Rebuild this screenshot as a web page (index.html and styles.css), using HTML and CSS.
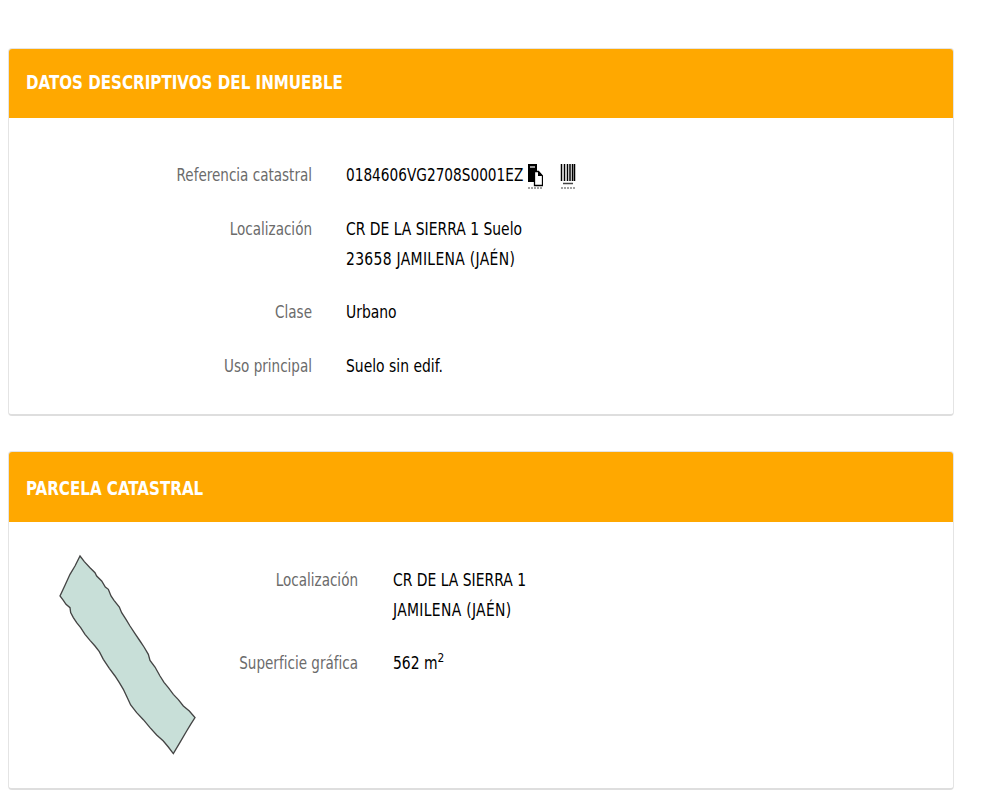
FILE: index.html
```html
<!DOCTYPE html>
<html lang="es">
<head>
    <meta charset="UTF-8">
    <title>Datos descriptivos del inmueble</title>
    <link rel="stylesheet" href="styles.css">
</head>
<body>
    <div class="card first">
        <div class="card-head"><span>DATOS DESCRIPTIVOS DEL INMUEBLE</span></div>
        <div class="card-body">
            <div class="rows">
                <div class="row">
                    <div class="label">Referencia catastral</div>
                    <div class="ref">
                        <span class="ref-num">0184606VG2708S0001EZ</span>
                        <svg class="icon-copy" width="16" height="28" viewBox="0 0 16 28">
                            <path d="M1 3h9v18h-9z" fill="#000"/>
                            <path d="M3 5h5v2h-5z" fill="#9a9a9a"/>
                            <path d="M7.500 10.500h4l4 4.500v9.500h-8z" fill="#fff" stroke="#000" stroke-width="1.300"/>
                            <path d="M11 10l4.500 5h-4.500z" fill="#000"/>
                            <path d="M1 27h14" stroke="#444" stroke-width="1" stroke-dasharray="2 1"/>
                        </svg>
                        <svg class="icon-bar" width="16" height="28" viewBox="0 0 16 28">
                            <path d="M1.500 3v17M4.500 3v17M7.500 3v17M10 3v17M12.500 3v17M14.500 3v17" stroke="#000" stroke-width="1.500"/>
                            <path d="M3 22.500h10" stroke="#444" stroke-width="1.400"/>
                            <path d="M1 27h14" stroke="#444" stroke-width="1" stroke-dasharray="2 1"/>
                        </svg>
                    </div>
                </div>
                <div class="row">
                    <div class="label">Localización</div>
                    <div class="value">CR DE LA SIERRA 1 Suelo<br><span class="wide">23658 JAMILENA (JAÉN)</span></div>
                </div>
                <div class="row">
                    <div class="label">Clase</div>
                    <div class="value">Urbano</div>
                </div>
                <div class="row">
                    <div class="label">Uso principal</div>
                    <div class="value">Suelo sin edif.</div>
                </div>
            </div>
        </div>
    </div>

    <div class="card second">
        <div class="card-head"><span>PARCELA CATASTRAL</span></div>
        <div class="card-body parcel">
            <svg class="plot" width="170" height="225" viewBox="0 0 510 675">
                <polygon points="120,45 133,62 150,80 165,95 170,105 185,120 196,138 205,145 213,165 222,178 238,198 245,215 258,235 270,255 285,278 300,300 312,318 325,340 330,358 345,378 360,405 372,424 385,440 400,460 415,476 430,495 448,510 465,530 452,550 440,570 420,604 400,638 385,618 370,600 350,582 330,560 310,536 290,515 272,492 262,470 250,445 238,425 225,405 208,382 190,355 178,332 165,315 150,298 135,280 122,260 110,245 100,230 92,215 90,200 78,190 70,178 60,165 75,133 90,100 105,75" fill="#c8dfd8" stroke="#444" stroke-width="4"/>
            </svg>
            <div class="rows small">
                <div class="row">
                    <div class="label">Localización</div>
                    <div class="value">CR DE LA SIERRA 1<br><span class="wide">JAMILENA (JAÉN)</span></div>
                </div>
                <div class="row">
                    <div class="label">Superficie gráfica</div>
                    <div class="value">562 m<sup>2</sup></div>
                </div>
            </div>
        </div>
    </div>
</body>
</html>
```

FILE: styles.css
```css
*{box-sizing:border-box;}
body{margin:48px 46px 0 8px;font-family:"DejaVu Sans Condensed","DejaVu Sans",sans-serif;font-stretch:condensed;font-size:17px;color:#000;background:#fff;}

.card{border:1px solid #e4e4e4;border-bottom:2px solid #dedede;border-radius:4px;overflow:hidden;background:#fff;}
.card.first{margin-bottom:35px;}
.card-head{height:69px;line-height:67px;padding-left:17px;background:#ffa800;color:#fff;font-weight:bold;font-size:20px;}
.second .card-head{height:70px;line-height:72px;}
/* the original face is narrower than anything installed */
.card-head span{display:inline-block;transform:scaleX(.84);transform-origin:left;}
.card-body{padding:42px 0 33px;}

.row{display:flex;margin-bottom:23.600px;line-height:30px;}
.row:last-child{margin-bottom:0;}
.label{width:303px;margin-right:34px;text-align:right;color:#6b6b6b;transform:scaleX(.885);transform-origin:right;}
.value{flex:1;transform:scaleX(.91);transform-origin:left;}
.wide{letter-spacing:.35px;}
.ref{display:flex;flex:1;align-items:center;}
.ref-num{transform:scaleX(.895);transform-origin:left;}
.icon-copy{margin-left:-17px;}
.icon-bar{margin-left:17px;}
.value sup{font-size:13px;line-height:0;}

.parcel{display:flex;padding:19px 0 22px 31px;}
.plot{flex:none;}
.rows.small{padding-top:24px;}
.small .label{width:148px;margin-right:35px;}
```
